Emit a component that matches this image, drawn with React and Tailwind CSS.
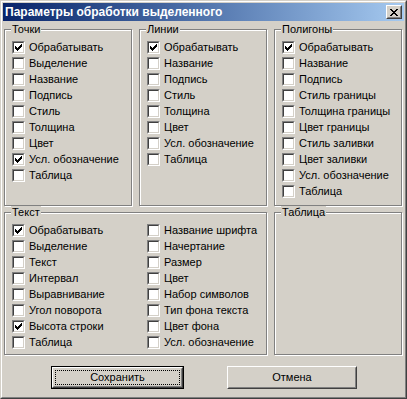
import React from "react";

// classic 9x9 tick, one 1x3 run per column
const tick = [2, 3, 4, 3, 2, 1, 0];

const Check = ({ checked }) => (
  <span className="flex h-[13px] w-[13px] shrink-0 border border-t-[#808080] border-l-[#808080] border-r-white border-b-white">
    <span className="flex h-[11px] w-[11px] border border-t-[#404040] border-l-[#404040] border-r-[#d4d0c8] border-b-[#d4d0c8] bg-white">
      {checked && (
        <svg width="9" height="9" viewBox="0 0 9 9" shapeRendering="crispEdges">
          {tick.map((y, i) => (
            <rect key={i} x={i + 1} y={y + 1} width="1" height="3" fill="#000" />
          ))}
        </svg>
      )}
    </span>
  </span>
);

const Row = ({ label, checked }) => (
  <div className="flex h-[13px] items-center gap-[4px]">
    <Check checked={checked} />
    <span className="whitespace-nowrap leading-[13px]">{label}</span>
  </div>
);

const Group = ({ title, className = "", children }) => (
  <div className={`border border-[#808080] pl-[7px] shadow-[1px_1px_0_#fff,inset_1px_1px_0_#fff] ${className}`}>
    <div className="-mt-[7px] ml-[-1px] w-fit bg-[#d4d0c8] px-[1px] leading-[13px]">{title}</div>
    {children}
  </div>
);

const List = ({ items }) => (
  <div className="mt-[5px] flex flex-col gap-[3px]">
    {items.map(([label, checked]) => (
      <Row key={label} label={label} checked={checked} />
    ))}
  </div>
);

const points = [
  ["Обрабатывать", true],
  ["Выделение", false],
  ["Название", false],
  ["Подпись", false],
  ["Стиль", false],
  ["Толщина", false],
  ["Цвет", false],
  ["Усл. обозначение", true],
  ["Таблица", false],
];

const lines = [
  ["Обрабатывать", true],
  ["Название", false],
  ["Подпись", false],
  ["Стиль", false],
  ["Толщина", false],
  ["Цвет", false],
  ["Усл. обозначение", false],
  ["Таблица", false],
];

const polygons = [
  ["Обрабатывать", true],
  ["Название", false],
  ["Подпись", false],
  ["Стиль границы", false],
  ["Толщина границы", false],
  ["Цвет границы", false],
  ["Стиль заливки", false],
  ["Цвет заливки", false],
  ["Усл. обозначение", false],
  ["Таблица", false],
];

const textLeft = [
  ["Обрабатывать", true],
  ["Выделение", false],
  ["Текст", false],
  ["Интервал", false],
  ["Выравнивание", false],
  ["Угол поворота", false],
  ["Высота строки", true],
  ["Таблица", false],
];

const textRight = [
  ["Название шрифта", false],
  ["Начертание", false],
  ["Размер", false],
  ["Цвет", false],
  ["Набор символов", false],
  ["Тип фона текста", false],
  ["Цвет фона", false],
  ["Усл. обозначение", false],
];

// close glyph 8x7
const cross = [
  [0, 0], [1, 0], [6, 0], [7, 0],
  [1, 1], [2, 1], [5, 1], [6, 1],
  [2, 2], [3, 2], [4, 2], [5, 2],
  [3, 3], [4, 3],
  [2, 4], [3, 4], [4, 4], [5, 4],
  [1, 5], [2, 5], [5, 5], [6, 5],
  [0, 6], [1, 6], [6, 6], [7, 6],
];

export default function App() {
  return (
    <div className="h-[399px] w-[407px] border border-t-[#d4d0c8] border-l-[#d4d0c8] border-r-[#404040] border-b-[#404040] bg-[#d4d0c8] font-['Liberation_Sans',Arial,sans-serif] text-[11px] text-black">
      <div className="h-full border border-t-white border-l-white border-r-[#808080] border-b-[#808080] p-[1px]">
        {/* title bar */}
        <div className="flex h-[18px] items-center justify-between bg-linear-to-r from-[#0a246a] to-[#a6caf0] pl-[2px] pr-[2px]">
          <span className="text-[12px] font-bold leading-[18px] text-white">Параметры обработки выделенного</span>
          <div className="h-[14px] w-[16px] border border-t-white border-l-white border-r-[#404040] border-b-[#404040] bg-[#d4d0c8]">
            <div className="flex h-full items-center justify-center border border-t-[#d4d0c8] border-l-[#d4d0c8] border-r-[#808080] border-b-[#808080]">
              <svg width="8" height="7" viewBox="0 0 8 7" shapeRendering="crispEdges">
                {cross.map(([x, y]) => (
                  <rect key={`${x}-${y}`} x={x} y={y} width="1" height="1" fill="#000" />
                ))}
              </svg>
            </div>
          </div>
        </div>

        <div className="mt-[8px] grid grid-cols-[128px_128px_128px] grid-rows-[177px_143px] gap-x-[7px] gap-y-[6px] pl-[1px]">
          <Group title="Точки">
            <List items={points} />
          </Group>
          <Group title="Линии">
            <List items={lines} />
          </Group>
          <Group title="Полигоны">
            <List items={polygons} />
          </Group>
          <Group title="Текст" className="col-span-2">
            <div className="grid grid-cols-[135px_1fr]">
              <List items={textLeft} />
              <List items={textRight} />
            </div>
          </Group>
          <Group title="Таблица" />
        </div>

        {/* buttons */}
        <div className="mt-[11px] flex gap-[43px] pl-[48px]">
          <button className="h-[23px] w-[133px] border border-black">
            <div className="h-full border border-t-white border-l-white border-r-[#404040] border-b-[#404040]">
              <div className="h-full border border-t-[#d4d0c8] border-l-[#d4d0c8] border-r-[#808080] border-b-[#808080] p-[1px]">
                <div className="flex h-full items-center justify-center border border-dotted border-black leading-[13px]">
                  Сохранить
                </div>
              </div>
            </div>
          </button>
          <button className="h-[23px] w-[130px] border border-t-white border-l-white border-r-[#404040] border-b-[#404040]">
            <div className="flex h-full items-center justify-center border border-t-[#d4d0c8] border-l-[#d4d0c8] border-r-[#808080] border-b-[#808080] leading-[13px]">
              Отмена
            </div>
          </button>
        </div>
      </div>
    </div>
  );
}
